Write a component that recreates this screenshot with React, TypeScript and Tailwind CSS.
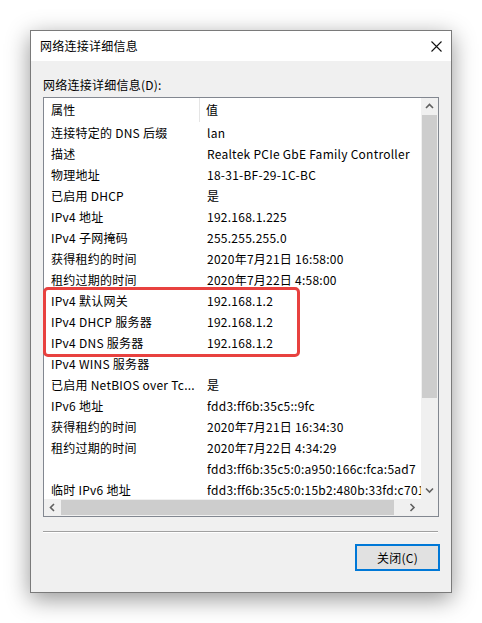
import React from 'react';

const rows: [string, string][] = [
  ['连接特定的 DNS 后缀', 'lan'],
  ['描述', 'Realtek PCIe GbE Family Controller'],
  ['物理地址', '18-31-BF-29-1C-BC'],
  ['已启用 DHCP', '是'],
  ['IPv4 地址', '192.168.1.225'],
  ['IPv4 子网掩码', '255.255.255.0'],
  ['获得租约的时间', '2020年7月21日 16:58:00'],
  ['租约过期的时间', '2020年7月22日 4:58:00'],
  ['IPv4 默认网关', '192.168.1.2'],
  ['IPv4 DHCP 服务器', '192.168.1.2'],
  ['IPv4 DNS 服务器', '192.168.1.2'],
  ['IPv4 WINS 服务器', ''],
  ['已启用 NetBIOS over Tc...', '是'],
  ['IPv6 地址', 'fdd3:ff6b:35c5::9fc'],
  ['获得租约的时间', '2020年7月21日 16:34:30'],
  ['租约过期的时间', '2020年7月22日 4:34:29'],
  ['', 'fdd3:ff6b:35c5:0:a950:166c:fca:5ad7'],
  ['临时 IPv6 地址', 'fdd3:ff6b:35c5:0:15b2:480b:33fd:c701'],
];

function Chevron({ dir }: { dir: 'up' | 'down' | 'left' | 'right' }) {
  const d = {
    up: 'M1 6 L4.5 2.5 L8 6',
    down: 'M1 2.5 L4.5 6 L8 2.5',
    left: 'M6 1 L2.5 4.5 L6 8',
    right: 'M2.5 1 L6 4.5 L2.5 8',
  }[dir];
  return (
    <svg width="9" height="9" viewBox="0 0 9 9">
      <path d={d} fill="none" stroke="#606060" strokeWidth="1.6" />
    </svg>
  );
}

export default function App() {
  return (
    <div
      className="w-[482px] h-[623px] bg-white pl-[30px] pt-[30px] text-[12px] tracking-[0.25px] text-black"
      style={{ fontFamily: '"Noto Sans CJK SC", "Noto Sans", sans-serif' }}
    >
      <div className="w-[422px] h-[563px] border border-[#7a7a7a] bg-[#f0f0f0] flex flex-col shadow-[0_6px_22px_rgba(0,0,0,0.42)]">
        {/* Title bar */}
        <div className="h-[30px] bg-white flex items-center justify-between pl-[9px] pr-[9px]">
          <span className="leading-none">网络连接详细信息</span>
          <svg width="11" height="11" viewBox="0 0 11 11">
            <path d="M0.5 0.5 L10.5 10.5 M10.5 0.5 L0.5 10.5" stroke="#111" strokeWidth="1.1" />
          </svg>
        </div>

        {/* Body */}
        <div className="flex-1 flex flex-col px-[12px] pt-[16px]">
          <div className="h-[16px] leading-[16px]">网络连接详细信息(D):</div>

          <div className="relative mt-[4px] w-[396px] h-[420px] border border-[#828790] bg-white flex flex-col">
            <div className="flex flex-1 min-h-0">
              <div className="flex-1 overflow-hidden">
                <div className="h-[24px] flex items-center">
                  <div className="w-[156px] h-full flex items-center pl-[7px] border-r border-[#e5e5e5]">属性</div>
                  <div className="pl-[6px]">值</div>
                </div>
                {rows.map(([k, v], i) => (
                  <div key={i} className="h-[21px] flex items-center whitespace-nowrap">
                    <div className="w-[156px] shrink-0 pl-[7px]">{k}</div>
                    <div className="pl-[7px]">{v}</div>
                  </div>
                ))}
              </div>
              {/* Vertical scrollbar */}
              <div className="w-[17px] bg-[#f0f0f0] flex flex-col">
                <div className="h-[17px] flex items-center justify-center">
                  <Chevron dir="up" />
                </div>
                <div className="flex-1 flex flex-col">
                  <div className="h-[283px] mx-[1px] bg-[#cdcdcd]" />
                </div>
                <div className="h-[17px] flex items-center justify-center">
                  <Chevron dir="down" />
                </div>
              </div>
            </div>
            {/* Horizontal scrollbar */}
            <div className="h-[17px] flex">
              <div className="flex-1 bg-[#f0f0f0] flex">
                <div className="w-[17px] flex items-center justify-center">
                  <Chevron dir="left" />
                </div>
                <div className="flex-1 flex items-center">
                  <div className="w-[333px] h-[15px] bg-[#cdcdcd]" />
                </div>
                <div className="w-[17px] flex items-center justify-center">
                  <Chevron dir="right" />
                </div>
              </div>
              <div className="w-[17px] bg-[#f0f0f0]" />
            </div>

            {/* Highlight */}
            <div className="absolute left-[-1px] top-[189px] w-[257px] h-[70px] border-[3px] border-[#e8413f] rounded-[5px]" />
          </div>

          <div className="mt-[14px] w-[395px] border-t border-[#a0a0a0] border-b border-b-white" />

          <div className="flex justify-end mt-[11px] mr-[-1px]">
            <button className="w-[85px] h-[27px] border-2 border-[#0078d7] bg-[#e1e1e1] flex items-center justify-center">
              关闭(C)
            </button>
          </div>
        </div>
      </div>
    </div>
  );
}
